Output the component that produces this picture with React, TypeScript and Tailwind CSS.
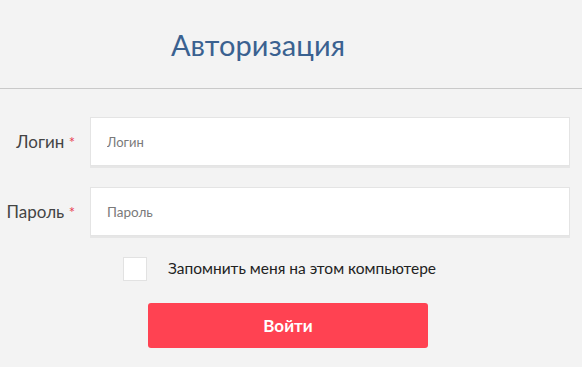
export default function App() {
  return (
    <div className="min-h-[367px] w-[582px] bg-[#f3f3f3] font-['Lato',sans-serif]">
      <div className="flex h-[89px] items-center justify-center border-b border-[#c9c9c9] pr-[66px] pt-[2px]">
        <h1 className="text-[29px] font-normal tracking-[0.1px] text-[#3a6190]">Авторизация</h1>
      </div>

      <div className="flex flex-col gap-[21px] pt-[28px] pr-[12px]">
        <div className="flex items-center">
          <label className="w-[90px] pr-[15px] text-right text-[17px] text-[#444]">
            Логин <span className="text-[15px] text-[#e8404f]">*</span>
          </label>
          <input
            placeholder="Логин"
            className="h-[49px] flex-1 border border-[#e4e4e4] bg-white px-[16px] text-[13px] text-[#333] shadow-[0_2px_0_#e6e6e6] outline-none placeholder:text-[#7a7a7a]"
          />
        </div>
        <div className="flex items-center">
          <label className="w-[90px] pr-[15px] text-right text-[17px] text-[#444]">
            Пароль <span className="text-[15px] text-[#e8404f]">*</span>
          </label>
          <input
            type="password"
            placeholder="Пароль"
            className="h-[49px] flex-1 border border-[#e4e4e4] bg-white px-[16px] text-[13.5px] text-[#333] shadow-[0_2px_0_#e6e6e6] outline-none placeholder:text-[#7a7a7a]"
          />
        </div>
      </div>

      <div className="mt-[21px] flex items-center pl-[123px]">
        <span className="h-[24px] w-[24px] border border-[#e2e2e2] bg-white" />
        <span className="ml-[21px] text-[15.5px] text-[#222]">Запомнить меня на этом компьютере</span>
      </div>

      <div className="mt-[22px] pl-[148px]">
        <button className="h-[45px] w-[280px] rounded-[3px] bg-[#ff4252] text-[17px] font-bold text-white">
          Войти
        </button>
      </div>
    </div>
  );
}
